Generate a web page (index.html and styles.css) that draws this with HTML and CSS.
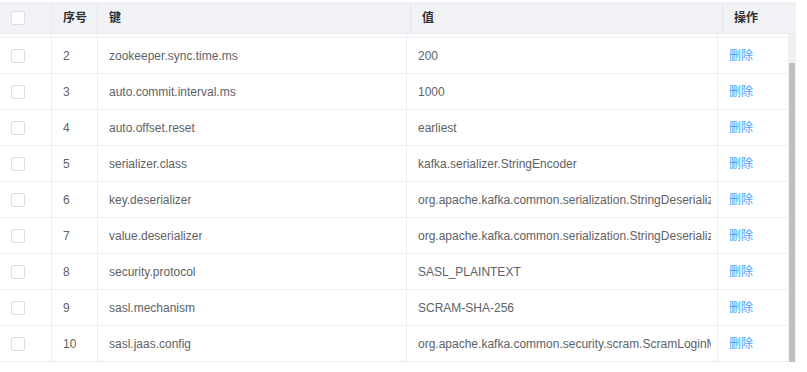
FILE: index.html
```html
<!DOCTYPE html>
<html lang="zh-CN">
<head>
    <meta charset="UTF-8">
    <meta name="viewport" content="width=device-width, initial-scale=1.0">
    <title>配置列表</title>
    <link rel="stylesheet" href="styles.css">
</head>
<body>
    <div class="config-table">
        <div class="table-header">
            <div class="cell"><span class="checkbox"></span></div>
            <div class="cell"><div class="text">序号</div></div>
            <div class="cell"><div class="text">键</div></div>
            <div class="cell"><div class="text">值</div></div>
            <div class="cell"><div class="text">操作</div></div>
        </div>
        <div class="table-wrap">
            <div class="table-body" id="tableBody"></div>
            <div class="scrollbar"><div class="scrollbar-thumb" id="thumb"></div></div>
        </div>
    </div>

    <script>
        const configs = [
            { key: 'zookeeper.session.timeout.ms', value: '400' },
            { key: 'zookeeper.sync.time.ms', value: '200' },
            { key: 'auto.commit.interval.ms', value: '1000' },
            { key: 'auto.offset.reset', value: 'earliest' },
            { key: 'serializer.class', value: 'kafka.serializer.StringEncoder' },
            { key: 'key.deserializer', value: 'org.apache.kafka.common.serialization.StringDeserializer' },
            { key: 'value.deserializer', value: 'org.apache.kafka.common.serialization.StringDeserializer' },
            { key: 'security.protocol', value: 'SASL_PLAINTEXT' },
            { key: 'sasl.mechanism', value: 'SCRAM-SHA-256' },
            { key: 'sasl.jaas.config', value: 'org.apache.kafka.common.security.scram.ScramLoginModule required;' }
        ];

        const tableBody = document.getElementById('tableBody');
        const thumb = document.getElementById('thumb');

        configs.forEach((item, index) => {
            const row = document.createElement('div');
            row.className = 'table-row';
            row.innerHTML = `
                <div class="cell"><span class="checkbox"></span></div>
                <div class="cell"><div class="text">${index + 1}</div></div>
                <div class="cell"><div class="text">${item.key}</div></div>
                <div class="cell"><div class="text">${item.value}</div></div>
                <div class="cell"><div class="text"><a class="link" href="#">删除</a></div></div>
            `;
            tableBody.appendChild(row);
        });

        function updateThumb() {
            const view = tableBody.clientHeight;
            const total = tableBody.scrollHeight;
            thumb.style.height = (view * view / total) + 'px';
            thumb.style.marginTop = (tableBody.scrollTop * view / total) + 'px';
        }

        tableBody.addEventListener('scroll', updateThumb);

        // show the end of the list
        tableBody.scrollTop = tableBody.scrollHeight;
        updateThumb();
    </script>
</body>
</html>
```

FILE: styles.css
```css
body {
    margin: 0;
    padding-top: 2px;
    font-family: "Liberation Sans", Arial, "Noto Sans CJK SC", sans-serif;
    font-size: 12px;
    color: #606266;
    background-color: #fff;
}
.config-table {
    width: 796px;
}
.table-header {
    display: grid;
    grid-template-columns: 52px 46px 313px 312px 73px;
    height: 32px;
    box-sizing: border-box;
    background-color: #f0f2f5;
    border-bottom: 1px solid #e6e8ee;
    color: #303133;
    font-weight: bold;
}
.table-wrap {
    display: flex;
    height: 328px;
}
.table-body {
    width: 788px;
    overflow: hidden;
}
.scrollbar {
    width: 8px;
    background-color: #f1f1f1;
}
.scrollbar-thumb {
    width: 6px;
    margin-left: 1px;
    background-color: #c1c1c1;
}
.table-row {
    display: grid;
    grid-template-columns: 52px 46px 309px 311px 70px;
    height: 36px;
    box-sizing: border-box;
    border-bottom: 1px solid #ebeef5;
}
.cell {
    display: flex;
    align-items: center;
    min-width: 0;
    padding: 0 6px 0 11px;
    border-right: 1px solid #ebeef5;
}
.table-header .cell {
    border-right-color: #e6e8ee;
}
.cell:last-child {
    border-right: none;
}
.text {
    line-height: 20px;
    overflow: hidden;
    white-space: nowrap;
}
.checkbox {
    display: inline-block;
    width: 14px;
    height: 14px;
    box-sizing: border-box;
    border: 1px solid #dcdfe6;
    border-radius: 2px;
    background-color: #fff;
}
.link {
    color: #409eff;
    text-decoration: none;
}
```
